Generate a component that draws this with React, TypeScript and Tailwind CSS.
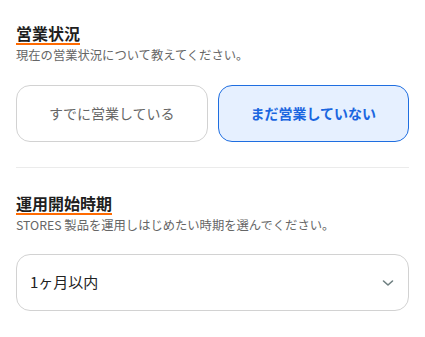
import React from "react";

export default function App() {
  const font = { fontFamily: '"Noto Sans CJK JP", "Noto Sans", sans-serif' };
  return (
    <div className="w-[425px] h-[337px] bg-white px-4 pt-[23px]" style={font}>
      <section>
        <h2 className="w-fit text-[16px] leading-[20px] font-bold text-[#1f1f1f] border-b-2 border-[#ff6a00]">
          営業状況
        </h2>
        <p className="text-[12.3px] leading-[20px] text-[#666]">
          現在の営業状況について教えてください。
        </p>
        <div className="mt-5 grid grid-cols-2 gap-[10px]">
          <button className="h-[57px] rounded-[14px] border border-[#d2d2d2] bg-white text-[14px] text-[#666]">
            すでに営業している
          </button>
          <button className="h-[57px] rounded-[14px] border border-[#1f6ee0] bg-[#e6f0ff] text-[14px] font-bold text-[#1a66e0]">
            まだ営業していない
          </button>
        </div>
      </section>
      <div className="mt-[25px] h-px bg-[#ebebeb]" />
      <section className="mt-[25px]">
        <h2 className="w-fit text-[16px] leading-[20px] font-bold text-[#1f1f1f] border-b-2 border-[#ff6a00]">
          運用開始時期
        </h2>
        <p className="text-[12.3px] leading-[20px] text-[#666]">
          STORES 製品を運用しはじめたい時期を選んでください。
        </p>
        <div className="mt-[19px] h-[57px] rounded-[14px] border border-[#d2d2d2] bg-white flex items-center justify-between pl-[13px] pr-[14px]">
          <span className="text-[15px] text-[#222]">1ヶ月以内</span>
          <svg width="12" height="8" viewBox="0 0 12 8" fill="none">
            <path d="M1.5 2 L6 6 L10.5 2" stroke="#6e7f80" strokeWidth="1.6" strokeLinecap="round" strokeLinejoin="round" />
          </svg>
        </div>
      </section>
    </div>
  );
}
